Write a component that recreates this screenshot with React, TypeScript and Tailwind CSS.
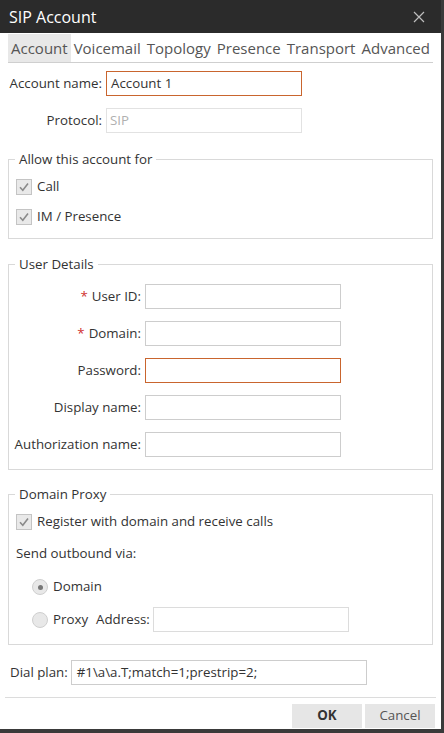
const font = { fontFamily: '"Open Sans", "Noto Sans", sans-serif' };

const tabs = ["Account", "Voicemail", "Topology", "Presence", "Transport", "Advanced"];

function Check({ label }: { label: string }) {
  return (
    <div className="flex items-center h-[20px]">
      <span className="w-[16px] h-[16px] border border-[#c4c4c4] bg-[#e9e9e9] flex items-center justify-center">
        <svg width="12" height="12" viewBox="0 0 12 12">
          <path d="M2 6.2 L4.8 9.2 L10 2.5" fill="none" stroke="#8a8a8a" strokeWidth="1.6" />
        </svg>
      </span>
      <span className="ml-[5px]">{label}</span>
    </div>
  );
}

function Radio({ on, label }: { on?: boolean; label: string }) {
  return (
    <div className="flex items-center">
      <span className="w-[16px] h-[16px] rounded-full border border-[#cfcfcf] bg-[#e8e8e8] flex items-center justify-center">
        {on && <span className="w-[5px] h-[5px] rounded-full bg-[#777]" />}
      </span>
      <span className="ml-[5px]">{label}</span>
    </div>
  );
}

function Field({ label, req, focus }: { label: string; req?: boolean; focus?: boolean }) {
  return (
    <div className="flex items-center h-[25px]">
      <div className="w-[136px] text-right pr-[4px]">
        {req && <span className="text-[#d03030] mr-[4px]">*</span>}
        {label}
      </div>
      <div
        className={
          "w-[196px] h-[25px] bg-white " +
          (focus ? "border border-[#c9652e]" : "border border-[#cdcdcd]")
        }
      />
    </div>
  );
}

function Group({ title, className, children }: { title: string; className: string; children: React.ReactNode }) {
  return (
    <div className={"relative border border-[#d9d9d9] mx-[8px] " + className}>
      <span className="absolute left-[6px] top-[-11px] bg-white px-[4px] leading-[20px]">{title}</span>
      {children}
    </div>
  );
}

export default function App() {
  return (
    <div className="w-[444px] h-[733px] bg-[#3a3a3a] overflow-hidden text-[13.3px] text-[#333]" style={font}>
      <div className="w-[441px] h-[729px] bg-white flex flex-col">
        {/* TITLE BAR */}
        <div className="h-[33px] bg-[#2b2b2b] flex items-center justify-between pl-[9px] pr-[16px] text-white text-[16px]">
          <span>SIP Account</span>
          <svg width="12" height="12" viewBox="0 0 12 12">
            <path d="M1 1 L11 11 M11 1 L1 11" stroke="#bdbdbd" strokeWidth="1.2" />
          </svg>
        </div>

        {/* TABS */}
        <div className="mx-[8px] mt-[1px] flex border-b border-[#cfcfcf] text-[15px] text-[#555]">
          {tabs.map((t, i) => (
            <div
              key={t}
              className={"h-[28px] flex items-center px-[3px] " + (i === 0 ? "bg-[#e8e8e8]" : "")}
            >
              {t}
            </div>
          ))}
        </div>

        {/* ACCOUNT */}
        <div className="mt-[8px] flex items-center h-[25px]">
          <div className="w-[106px] text-right pr-[4px]">Account name:</div>
          <div className="w-[196px] h-[25px] border border-[#c9652e] flex items-center px-[4px]">Account 1</div>
        </div>
        <div className="mt-[12px] flex items-center h-[25px]">
          <div className="w-[106px] text-right pr-[4px]">Protocol:</div>
          <div className="w-[196px] h-[25px] border border-[#e2e2e2] flex items-center px-[3px] text-[#b0b0b0]">SIP</div>
        </div>

        <Group title="Allow this account for" className="mt-[26px] h-[80px] pt-[17px] pl-[7px]">
          <div className="flex flex-col gap-[10px]">
            <Check label="Call" />
            <Check label="IM / Presence" />
          </div>
        </Group>

        <Group title="User Details" className="mt-[25px] h-[206px] pt-[19px]">
          <div className="flex flex-col gap-[12px]">
            <Field label="User ID:" req />
            <Field label="Domain:" req />
            <Field label="Password:" focus />
            <Field label="Display name:" />
            <Field label="Authorization name:" />
          </div>
        </Group>

        <Group title="Domain Proxy" className="mt-[24px] h-[151px] pt-[17px] pl-[7px]">
          <Check label="Register with domain and receive calls" />
          <div className="mt-[11px] leading-[20px]">Send outbound via:</div>
          <div className="mt-[14px] ml-[16px] flex flex-col gap-[10px]">
            <div className="h-[20px] flex items-center">
              <Radio on label="Domain" />
            </div>
            <div className="h-[25px] flex items-center">
              <Radio label="Proxy" />
              <span className="ml-[8px]">Address:</span>
              <div className="ml-[3px] w-[196px] h-[25px] border border-[#dcdcdc]" />
            </div>
          </div>
        </Group>

        <div className="mt-[15px] ml-[10px] flex items-center h-[25px]">
          <span className="mr-[3px]">Dial plan:</span>
          <div className="w-[296px] h-[25px] border border-[#cdcdcd] flex items-center px-[5px]">#1\a\a.T;match=1;prestrip=2;</div>
        </div>

        <div className="mt-[12px] mx-[5px] border-t border-[#dcdcdc]" />

        <div className="mt-[6px] flex justify-end gap-[3px] pr-[6px]">
          <div className="w-[70px] h-[24px] bg-[#e6e6e6] flex items-center justify-center font-bold text-[#333]">OK</div>
          <div className="w-[70px] h-[24px] bg-[#e6e6e6] flex items-center justify-center text-[#555]">Cancel</div>
        </div>
      </div>
    </div>
  );
}
